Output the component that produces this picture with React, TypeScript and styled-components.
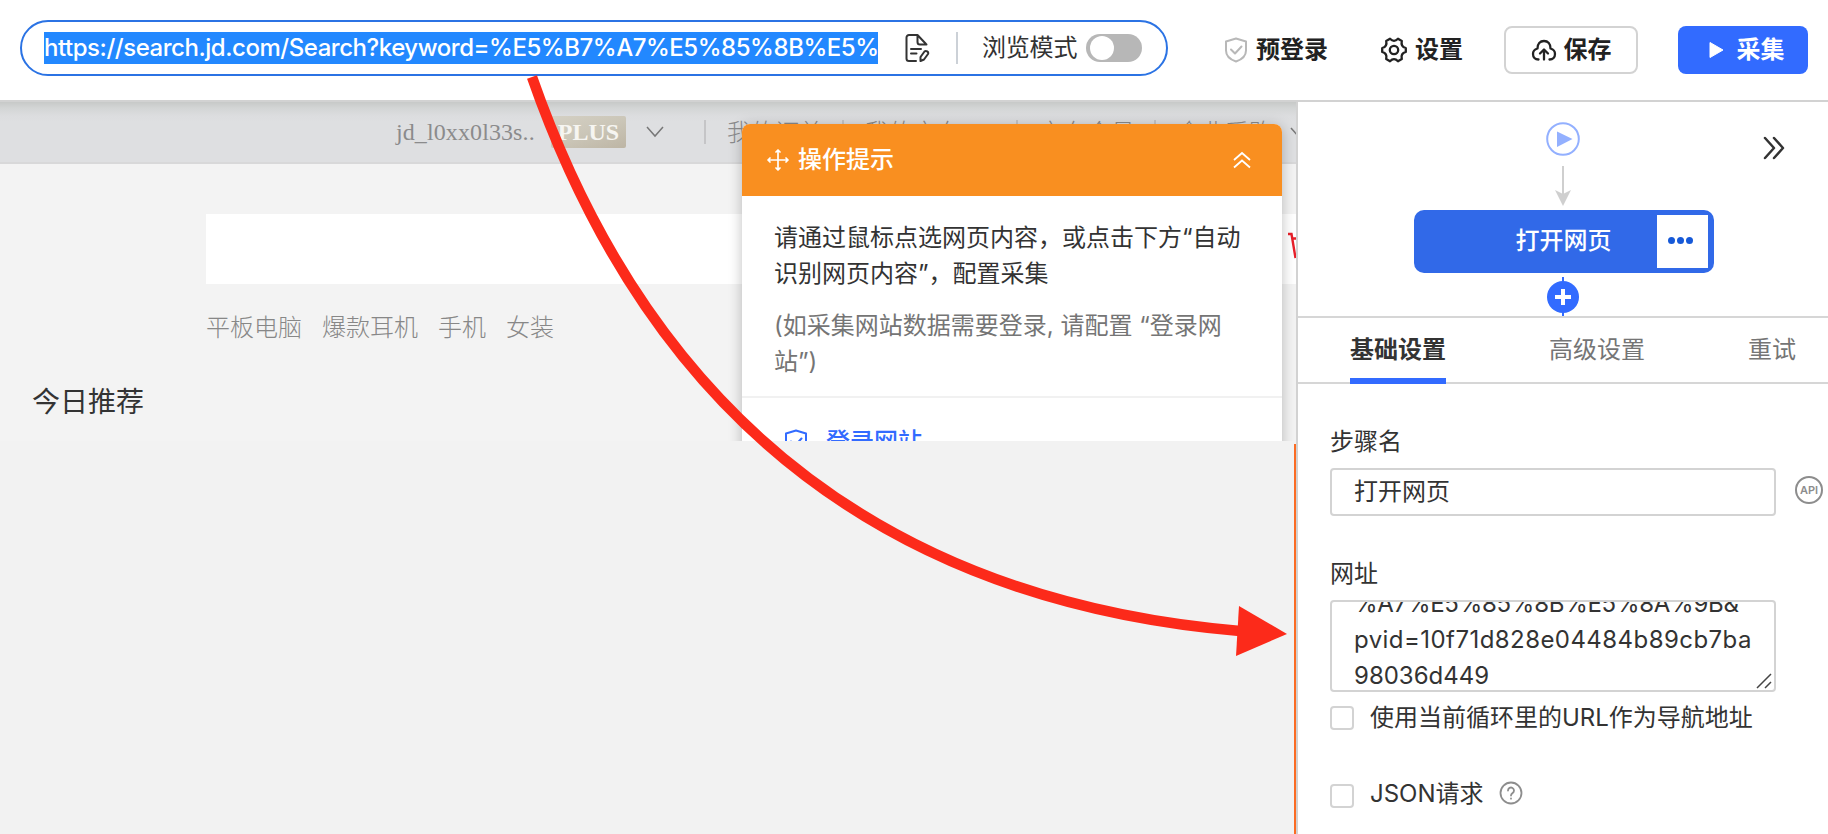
import React from 'react';
import styled, { createGlobalStyle } from 'styled-components';

const GlobalStyle = createGlobalStyle`
  * { box-sizing: border-box; }
  body { margin: 0; background: #fff; }
`;

const sans = `Inter, "Noto Sans CJK SC", sans-serif`;
const serif = `"Liberation Serif", "Noto Sans CJK SC", serif`;

const Screen = styled.div`
  position: relative;
  width: 1828px;
  height: 834px;
  overflow: hidden;
  display: flex;
  flex-direction: column;
  font-family: ${sans};
  font-size: 24px;
  line-height: 36px;
  color: #333;
  background: #fff;
  white-space: nowrap;
`;

const Header = styled.header`
  flex: none;
  height: 102px;
  display: flex;
  align-items: flex-start;
  padding: 20px 20px 0;
  border-bottom: 2px solid #d2d2d2;
  background: #fff;
`;

const AddressBar = styled.div`
  flex: none;
  width: 1148px;
  height: 56px;
  display: flex;
  align-items: center;
  padding-left: 22px;
  border: 2px solid #2b73e4;
  border-radius: 28px;
`;

const SelectedUrl = styled.div`
  width: 834px;
  height: 32px;
  line-height: 32px;
  overflow: hidden;
  background: #2288ff;
  color: #fff;
  font-weight: 500;
  letter-spacing: -0.46px;
`;

const NoteIcon = styled.svg`
  margin-left: 27px;
`;

const BarDivider = styled.span`
  width: 2px;
  height: 32px;
  margin: 0 24px 0 26px;
  background: #ccd1d7;
`;

const ModeLabel = styled.span`
  margin-top: -1px;
  letter-spacing: -0.2px;
`;

const Toggle = styled.span`
  width: 56px;
  height: 28px;
  margin-left: 9px;
  padding: 2px 4px;
  border-radius: 14px;
  background: #b7b7b7;
  &::after {
    content: '';
    display: block;
    width: 24px;
    height: 24px;
    border-radius: 50%;
    background: #fff;
  }
`;

const Actions = styled.div`
  display: flex;
  flex: 1;
  align-items: center;
  height: 48px;
  margin: 6px 0 0 56px;
  font-weight: 600;
  color: #222;
`;

const ActionItem = styled.div<{ $left: number }>`
  display: flex;
  align-items: center;
  gap: 8px;
  margin-left: ${(p) => p.$left}px;
  svg { flex: none; }
`;

const ActionButton = styled.button<{ $primary?: boolean }>`
  display: flex;
  flex: none;
  align-items: center;
  justify-content: center;
  gap: ${(p) => (p.$primary ? 13 : 7)}px;
  width: ${(p) => (p.$primary ? 130 : 134)}px;
  height: 48px;
  margin-left: ${(p) => (p.$primary ? '40px' : 'auto')};
  padding: 0 0 0 ${(p) => (p.$primary ? 7 : 0)}px;
  border: ${(p) => (p.$primary ? 'none' : '2px solid #d3d3d3')};
  border-radius: 8px;
  background: ${(p) => (p.$primary ? '#326bff' : '#fff')};
  color: ${(p) => (p.$primary ? '#fff' : '#222')};
  font: 600 24px/36px ${sans};
`;

const Body = styled.div`
  flex: 1;
  display: flex;
  min-height: 0;
`;

const Browser = styled.section`
  position: relative;
  flex: none;
  width: 1296px;
  display: flex;
  flex-direction: column;
  background: #f2f2f2;
`;

const WebPage = styled.div`
  position: relative;
  height: 339px;
  overflow: hidden;
  background: #f3f3f3;
  font-family: ${serif};
`;

const SiteNav = styled.div`
  height: 62px;
  display: flex;
  align-items: center;
  padding: 0 0 0 396px;
  border-bottom: 2px solid #d8d8d9;
  background: linear-gradient(#c7c9c8 0, #d3d5d5 6px, #dcdddf 14px, #dedfe1 20px);
  color: #8b8b8c;
  font-weight: 300;
  > * { flex: none; }
`;

const UserName = styled.span`
  width: 155px;
  letter-spacing: 0.1px;
`;

const PlusBadge = styled.span`
  width: 75px;
  height: 32px;
  border-radius: 2px;
  background: linear-gradient(160deg, #d4d0c4, #cbc6b8 50%, #bdb5a4);
  color: #f6f5f1;
  font: bold 24px/32px "Liberation Serif", serif;
  text-align: center;
  margin-right: 20px;
`;

const NavLink = styled.span<{ $width: number }>`
  width: ${(p) => p.$width}px;
  height: 24px;
  line-height: 26px;
  padding-left: 21px;
  border-left: 2px solid #c5c5c7;
`;

const SearchBox = styled.div`
  display: flex;
  justify-content: flex-end;
  height: 70px;
  margin: 50px 0 0 206px;
  padding-top: 18px;
  background: #fff;
`;

const HotWords = styled.div`
  display: flex;
  gap: 20px;
  margin: 26px 0 0 206px;
  color: #878787;
  font-weight: 300;
`;

const Recommend = styled.div`
  margin: 39px 0 0 32px;
  font-size: 28px;
`;

const Tips = styled.div`
  position: absolute;
  left: 742px;
  top: 22px;
  width: 540px;
  height: 400px;
  border-radius: 8px;
  background: #fff;
  box-shadow: 0 2px 14px rgba(0, 0, 0, 0.25);
  font-family: ${sans};
`;

const TipsHeader = styled.div`
  display: flex;
  align-items: center;
  height: 72px;
  padding: 0 31px 0 25px;
  border-radius: 8px 8px 0 0;
  background: #f98f20;
  color: #fff;
`;

const TipsTitle = styled.span`
  flex: 1;
  margin: -1px 0 0 9px;
  font-weight: 500;
`;

const TipsText = styled.p<{ $muted?: boolean }>`
  margin: 0;
  padding: ${(p) => (p.$muted ? '16px 32px 16px' : '24px 32px 0')};
  color: ${(p) => (p.$muted ? '#757575' : '#333')};
  border-bottom: ${(p) => (p.$muted ? '2px solid #f1f1f1' : 'none')};
`;

const TipsLink = styled.div`
  display: flex;
  align-items: center;
  gap: 18px;
  padding: 26px 0 0 42px;
  color: #326bff;
  font-weight: 500;
`;

const LoadingEdge = styled.div`
  flex: 1;
  margin-top: 3px;
  border-right: 2px solid #fb6c24;
`;

const Panel = styled.aside`
  flex: 1;
  display: flex;
  flex-direction: column;
  min-width: 0;
  border-left: 2px solid #d2d2d2;
  overflow: hidden;
`;

const Canvas = styled.div`
  position: relative;
  height: 216px;
  display: flex;
  flex-direction: column;
  align-items: center;
  padding: 20px 0 0;
  border-bottom: 2px solid #d6d6d6;
  svg { flex: none; }
`;

const Collapse = styled.svg`
  position: absolute;
  left: 464px;
  top: 34px;
`;

const StepCard = styled.div`
  flex: none;
  display: flex;
  align-items: center;
  width: 300px;
  height: 63px;
  margin: 2px 0 4px 1px;
  padding: 0 6px 0 102px;
  border-radius: 10px;
  background: #3169e8;
  color: #fff;
`;

const StepName = styled.span`
  flex: 1;
  margin-top: -2px;
  font-weight: 500;
`;

const StepMenu = styled.span`
  display: flex;
  align-items: center;
  justify-content: center;
  gap: 2px;
  width: 51px;
  height: 53px;
  padding: 0 3px 2px 0;
  background: #fff;
`;

const Dot = styled.i`
  width: 7px;
  height: 7px;
  border-radius: 50%;
  background: #1659d8;
`;

const Tabs = styled.div`
  display: flex;
  gap: 103px;
  height: 66px;
  padding-left: 52px;
  border-bottom: 2px solid #d6d6d6;
`;

const Tab = styled.div<{ $active?: boolean }>`
  height: 66px;
  padding-top: 14px;
  color: ${(p) => (p.$active ? '#333' : '#757575')};
  font-weight: ${(p) => (p.$active ? 700 : 400)};
  border-bottom: ${(p) => (p.$active ? '6px solid #326bff' : 'none')};
`;

const Form = styled.div`
  display: flex;
  flex-direction: column;
  padding: 38px 0 0 32px;
`;

const Label = styled.label`
  height: 46px;
  padding-top: 2px;
`;

const FieldRow = styled.div`
  display: flex;
  align-items: center;
  gap: 19px;
  height: 48px;
  margin-bottom: 38px;
`;

const TextField = styled.div`
  width: 446px;
  height: 48px;
  padding: 2px 22px;
  line-height: 40px;
  border: 2px solid #d3d3d3;
  border-radius: 4px;
`;

const ApiBadge = styled.span`
  flex: none;
  width: 28px;
  height: 28px;
  margin-top: -4px;
  border: 2px solid #8d8d8d;
  border-radius: 50%;
  color: #8d8d8d;
  font: 600 11px/24px ${sans};
  text-align: center;
`;

const UrlArea = styled.div`
  position: relative;
  width: 446px;
  height: 92px;
  display: flex;
  flex-direction: column;
  justify-content: flex-end;
  padding: 0 22px;
  border: 2px solid #d3d3d3;
  border-radius: 4px;
  overflow: hidden;
`;

const UrlLine = styled.div<{ $spacing: number }>`
  height: 36px;
  flex: none;
  line-height: 44px;
  letter-spacing: ${(p) => p.$spacing}px;
`;

const Resizer = styled.svg`
  position: absolute;
  right: 2px;
  bottom: 1px;
`;

const CheckRow = styled.div<{ $top: number }>`
  display: flex;
  align-items: center;
  height: 24px;
  margin-top: ${(p) => p.$top}px;
`;

const CheckBox = styled.span`
  width: 24px;
  height: 24px;
  margin-right: 16px;
  border: 2px solid #d3d3d3;
  border-radius: 4px;
`;

const CheckLabel = styled.span<{ $lift: number }>`
  margin-top: -${(p) => p.$lift}px;
`;

const HelpIcon = styled.svg`
  margin: -6px 0 0 15px;
`;

const Pointer = styled.svg`
  position: absolute;
  left: 0;
  top: 0;
  pointer-events: none;
`;

const Shield = ({ color }: { color: string }) => (
  <svg width="24" height="26" viewBox="0 0 24 26" fill="none" stroke={color} strokeWidth="2" strokeLinejoin="round">
    <path d="M12 1.500 22 4.500v9c0 5.500-4 9-10 11C6 22.500 2 19 2 13.500v-9Z" />
    <path d="m7 12.500 4 4 6.500-7" strokeLinecap="round" />
  </svg>
);

const Gear = () => (
  <svg width="26" height="26" viewBox="0 0 26 26" fill="none" stroke="#222" strokeWidth="2.300" strokeLinejoin="round">
    <path d="M9 1.800Q13 6 17 1.800L20.800 4Q19.500 9.800 24.800 11V15Q19.500 16.200 20.800 22L17 24.200Q13 20 9 24.200L5.200 22Q6.500 16.200 1.200 15V11Q6.500 9.800 5.200 4Z" />
    <circle cx="13" cy="13" r="4.200" />
  </svg>
);

const CloudUp = () => (
  <svg width="26" height="24" viewBox="0 0 26 24" fill="none" stroke="#222" strokeWidth="2.300" strokeLinecap="round" strokeLinejoin="round">
    <path d="M7.500 21.500C4 21.500 2 19 2 16s2-4.800 4.500-5.500C6.500 6 9 3 13 3s6.500 3 6.500 7.500C22 11.200 24 13 24 16s-2 5.500-5.500 5.500" />
    <path d="M13 21.500V12M9 15.500l4-4 4 4" />
  </svg>
);

export default function App() {
  return (
    <Screen>
      <GlobalStyle />
      <Header>
        <AddressBar>
          <SelectedUrl>https://search.jd.com/Search?keyword=%E5%B7%A7%E5%85%8B%E5%</SelectedUrl>
          <NoteIcon width="25" height="30" viewBox="0 0 25 30" fill="none" stroke="#333" strokeWidth="2" strokeLinecap="round" strokeLinejoin="round">
            <path d="M11 28H4a2.500 2.500 0 0 1-2.500-2.500V4.500A2.500 2.500 0 0 1 4 2h8.500l8.500 9M12.500 2v7a2.500 2.500 0 0 0 2.500 2.500h6.500" />
            <path d="M6 16h10M6 20.500h5.500M15.500 24l4-5.500c1.500-1.500 4.500.5 3.500 2.500l-4 5.500-3.500 1.500Z" />
          </NoteIcon>
          <BarDivider />
          <ModeLabel>浏览模式</ModeLabel>
          <Toggle />
        </AddressBar>
        <Actions>
          <ActionItem $left={0}><Shield color="#b8b8b8" />预登录</ActionItem>
          <ActionItem $left={53}><Gear />设置</ActionItem>
          <ActionButton><CloudUp />保存</ActionButton>
          <ActionButton $primary>
            <svg width="15" height="18" viewBox="0 0 15 18"><path d="M1 1.500v15L14 9Z" fill="#fff" stroke="#fff" strokeLinejoin="round" /></svg>
            采集
          </ActionButton>
        </Actions>
      </Header>

      <Body>
        <Browser>
          <WebPage>
            <SiteNav>
              <UserName>jd_l0xx0l33s..</UserName>
              <PlusBadge>PLUS</PlusBadge>
              <svg width="58" height="12" viewBox="0 0 58 12" fill="none" stroke="#777" strokeWidth="1.500"><path d="m1 1 8 9 8-9" /></svg>
              <NavLink $width={138}>我的订单</NavLink>
              <NavLink $width={174}>我的京东</NavLink>
              <NavLink $width={138}>京东会员</NavLink>
              <NavLink $width={136}>企业采购</NavLink>
              <svg width="14" height="12" viewBox="0 0 14 12" fill="none" stroke="#777" strokeWidth="1.500"><path d="m1 2 8 9" /></svg>
            </SiteNav>
            <SearchBox>
              <svg width="8" height="32" viewBox="0 0 8 32" fill="none" stroke="#e8202a" strokeWidth="2.400"><path d="M0 2h3.500L7.500 26M5 6.500h3" /></svg>
            </SearchBox>
            <HotWords>
              <span>平板电脑</span>
              <span>爆款耳机</span>
              <span>手机</span>
              <span>女装</span>
            </HotWords>
            <Recommend>今日推荐</Recommend>
            <Tips>
              <TipsHeader>
                <svg width="22" height="22" viewBox="0 0 22 22" fill="none" stroke="#fff" strokeWidth="1.700" strokeLinejoin="round" strokeLinecap="round">
                  <path d="M11 1.500v19M1.500 11h19M9 3 11 1l2 2M9 19l2 2 2-2M3 9l-2 2 2 2M19 9l2 2-2 2" />
                </svg>
                <TipsTitle>操作提示</TipsTitle>
                <svg width="18" height="18" viewBox="0 0 18 18" fill="none" stroke="#fff" strokeWidth="1.800"><path d="m1 9 8-7 8 7M1 16.500 9 9.500l8 7" /></svg>
              </TipsHeader>
              <TipsText>请通过鼠标点选网页内容，或点击下方“自动<br />识别网页内容”，配置采集</TipsText>
              <TipsText $muted>(如采集网站数据需要登录, 请配置 “登录网<br />站”)</TipsText>
              <TipsLink><Shield color="#326bff" />登录网站</TipsLink>
            </Tips>
          </WebPage>
          <LoadingEdge />
        </Browser>

        <Panel>
          <Canvas>
            <svg width="34" height="34" viewBox="0 0 34 34">
              <circle cx="17" cy="17" r="15.800" fill="#fff" stroke="#93b0ff" strokeWidth="2" />
              <path d="M11 9.500v15.500L26.500 17Z" fill="#93b0ff" />
            </svg>
            <svg width="18" height="52" viewBox="0 0 18 52">
              <path d="M9 10v30" stroke="#cfcfcf" strokeWidth="2" />
              <path d="M1 34l8 4 8-4-8 16Z" fill="#cfcfcf" />
            </svg>
            <StepCard>
              <StepName>打开网页</StepName>
              <StepMenu><Dot /><Dot /><Dot /></StepMenu>
            </StepCard>
            <svg width="34" height="39" viewBox="0 0 34 39">
              <path d="M17 0v39" stroke="#326bff" strokeWidth="2" />
              <circle cx="17" cy="20" r="16" fill="#326bff" />
              <path d="M17 12v16M9 20h16" stroke="#fff" strokeWidth="4" />
            </svg>
            <Collapse width="24" height="24" viewBox="0 0 24 24" fill="none" stroke="#333" strokeWidth="2.500" strokeLinecap="round" strokeLinejoin="round">
              <path d="m3 2 9 10-9 10M12 2l9 10-9 10" />
            </Collapse>
          </Canvas>
          <Tabs>
            <Tab $active>基础设置</Tab>
            <Tab>高级设置</Tab>
            <Tab>重试</Tab>
          </Tabs>
          <Form>
            <Label>步骤名</Label>
            <FieldRow>
              <TextField>打开网页</TextField>
              <ApiBadge>API</ApiBadge>
            </FieldRow>
            <Label>网址</Label>
            <UrlArea>
              <UrlLine $spacing={-0.27}>%A7%E5%85%8B%E5%8A%9B&amp;</UrlLine>
              <UrlLine $spacing={0.44}>pvid=10f71d828e04484b89cb7ba</UrlLine>
              <UrlLine $spacing={0}>98036d449</UrlLine>
              <Resizer width="16" height="16" viewBox="0 0 16 16" stroke="#444" strokeWidth="1.500"><path d="M1 15 15 1M9 15l6-6" /></Resizer>
            </UrlArea>
            <CheckRow $top={14}>
              <CheckBox />
              <CheckLabel $lift={0}>使用当前循环里的URL作为导航地址</CheckLabel>
            </CheckRow>
            <CheckRow $top={54}>
              <CheckBox />
              <CheckLabel $lift={4}>JSON请求</CheckLabel>
              <HelpIcon width="24" height="24" viewBox="0 0 24 24" fill="none" stroke="#8d8d8d" strokeWidth="1.800" strokeLinecap="round">
                <circle cx="12" cy="12" r="10.500" />
                <path d="M9 9.500a3 3 0 1 1 4.500 2.600c-1 .6-1.500 1.200-1.500 2.400M12 17.500v.2" />
              </HelpIcon>
            </CheckRow>
          </Form>
        </Panel>
      </Body>

      <Pointer width="1828" height="834" viewBox="0 0 1828 834">
        <path d="M532 77Q710 586 1240 631" fill="none" stroke="#fc2a1a" strokeWidth="10.500" />
        <path d="M1239 606 1287 634 1236 656Z" fill="#fc2a1a" />
      </Pointer>
    </Screen>
  );
}
